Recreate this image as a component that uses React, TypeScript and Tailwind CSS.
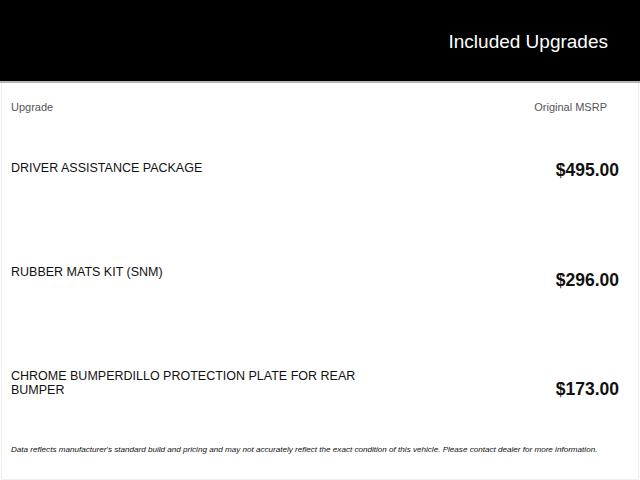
const rows = [
  { name: "DRIVER ASSISTANCE PACKAGE", price: "$495.00", priceTop: "mt-[-1px]", h: "h-[104px]" },
  { name: "RUBBER MATS KIT (SNM)", price: "$296.00", priceTop: "mt-[5px]", h: "h-[104px]" },
  {
    name: "CHROME BUMPERDILLO PROTECTION PLATE FOR REAR BUMPER",
    price: "$173.00",
    priceTop: "mt-[10px]",
    h: "h-[77px]",
  },
];

export default function App() {
  return (
    <div className="w-[640px] h-[480px] bg-white font-['Liberation_Sans',Arial,sans-serif] text-[#111] overflow-hidden">
      <div className="h-[83px] bg-black flex items-center justify-end pr-[32px] border-b-2 border-[#b5b5b5]">
        <h1 className="text-white text-[19px] leading-none mt-[1px]">Included Upgrades</h1>
      </div>
      <div className="mx-[1px] h-[397px] border-x border-b border-[#eeeeee] pl-[9px] pr-[19px] flex flex-col">
        <div className="flex justify-between text-[11px] text-[#555] pt-[16px] h-[77px] pr-[12px]">
          <span>Upgrade</span>
          <span>Original MSRP</span>
        </div>
        {rows.map((r) => (
          <div key={r.price} className={"flex justify-between items-start pt-[1px] " + r.h}>
            <div className="text-[12.5px] leading-[14px] w-[360px]">{r.name}</div>
            <div className={"text-[17.5px] font-bold leading-[20px] " + r.priceTop}>{r.price}</div>
          </div>
        ))}
        <p className="text-[8.1px] leading-[10px] italic text-[#111] whitespace-nowrap">
          Data reflects manufacturer's standard build and pricing and may not accurately reflect the exact condition of this vehicle. Please contact dealer for more information.
        </p>
      </div>
    </div>
  );
}
